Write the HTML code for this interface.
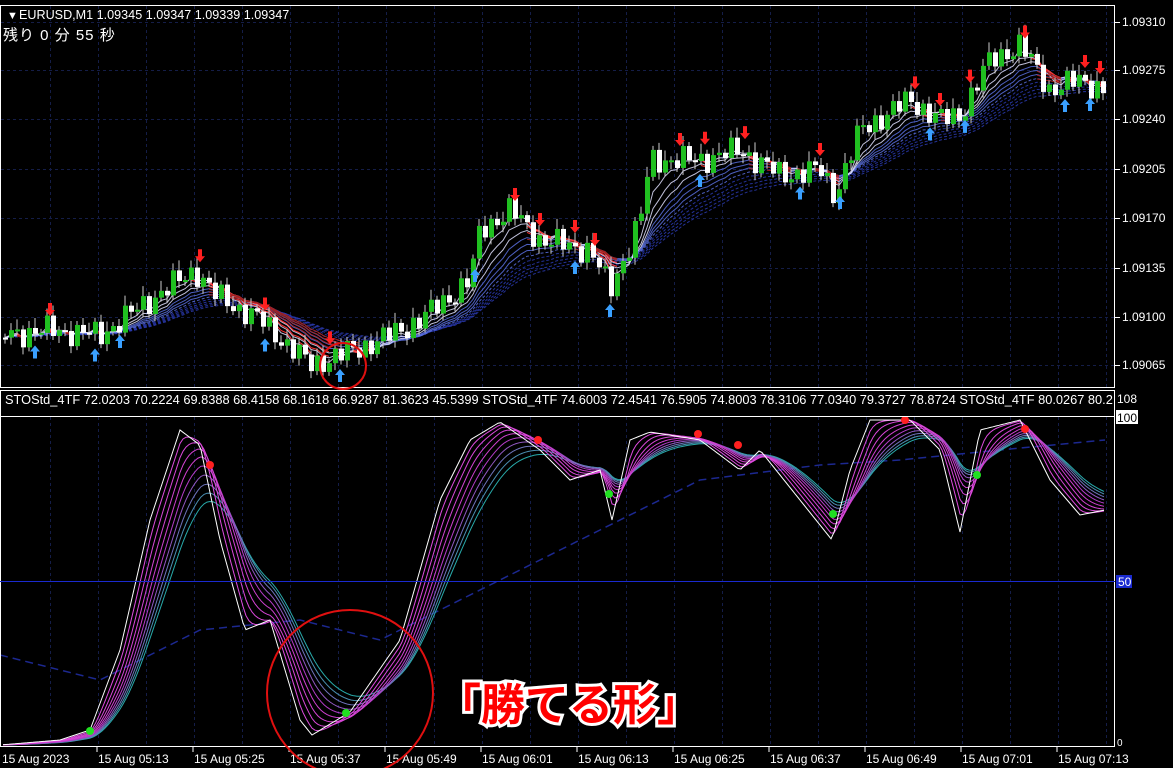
<!DOCTYPE html>
<html><head><meta charset="utf-8">
<style>
html,body{margin:0;padding:0;background:#000;width:1173px;height:768px;overflow:hidden}
svg{display:block}
text{font-family:"Liberation Sans","Noto Sans CJK JP",sans-serif}
</style></head><body>
<svg id="s" width="1173" height="768" xmlns="http://www.w3.org/2000/svg">
<rect width="1173" height="768" fill="#000"/>
<g id="grid" stroke="#141d48" stroke-dasharray="3,3" stroke-width="1"></g>
<g id="draw"></g>
<rect x="0.5" y="5.5" width="1114" height="382" fill="none" stroke="#fff"/>
<rect x="0.5" y="390.5" width="1114" height="356" fill="none" stroke="#fff"/>
<line x1="0" y1="416.5" x2="1115" y2="416.5" stroke="#fff"/>
<line x1="0" y1="581.5" x2="1115" y2="581.5" stroke="#1a2ad0"/>
<g fill="#fff" font-size="12">
<text x="7" y="19" font-size="11">▼</text>
<text x="19" y="19" font-size="12.6">EURUSD,M1  1.09345 1.09347 1.09339 1.09347</text>
<text x="3" y="40" font-size="15" letter-spacing="1">残り 0 分 55 秒</text>
<text x="5" y="404" font-size="12.8">STOStd_4TF 72.0203 70.2224 69.8388 68.4158 68.1618 66.9287 81.3623 45.5399   STOStd_4TF 74.6003 72.4541 76.5905 74.8003 78.3106 77.0340 79.3727 78.8724   STOStd_4TF 80.0267 80.2</text>
</g>
<rect x="1115" y="391" width="58" height="22" fill="#000"/>
<g id="axis" fill="#fff" font-size="12"></g>
<rect x="1116" y="410" width="22" height="14" fill="#fff"/>
<text x="1117" y="422" font-size="12" fill="#000">100</text>
<text x="1117" y="403" font-size="12" fill="#fff">108</text>
<rect x="1116" y="575" width="16" height="13" fill="#1a2ad0"/>
<text x="1118" y="586" font-size="12" fill="#fff">50</text>
<text x="1117" y="746" font-size="10" fill="#fff">0</text>
<circle cx="343" cy="366" r="23" fill="none" stroke="#e01010" stroke-width="2"/>
<circle cx="350" cy="693" r="83" fill="none" stroke="#e01010" stroke-width="2"/>
<text x="437" y="720" font-size="44" font-weight="bold" fill="#f00" stroke="#fff" stroke-width="6" paint-order="stroke">「勝てる形」</text>
</svg>
<script>
const NS="http://www.w3.org/2000/svg";
const g=document.getElementById('draw'),gr=document.getElementById('grid'),ax=document.getElementById('axis');
function el(t,a,p){const e=document.createElementNS(NS,t);for(const k in a)e.setAttribute(k,a[k]);(p||g).appendChild(e);return e;}
for(let x=50;x<1115;x+=48){el('line',{x1:x+.5,y1:6,x2:x+.5,y2:387},gr);el('line',{x1:x+.5,y1:417,x2:x+.5,y2:746},gr);}
const py=[22,70,119,169,218,268,317,365],pl=["1.09310","1.09275","1.09240","1.09205","1.09170","1.09135","1.09100","1.09065"];
py.forEach((y,i)=>{el('line',{x1:1,y1:y+.5,x2:1114,y2:y+.5},gr);el('line',{x1:1115,y1:y+.5,x2:1120,y2:y+.5,stroke:'#fff'},ax);const t=el('text',{x:1122,y:y+4},ax);t.textContent=pl[i];});
const tl=["15 Aug 2023","15 Aug 05:13","15 Aug 05:25","15 Aug 05:37","15 Aug 05:49","15 Aug 06:01","15 Aug 06:13","15 Aug 06:25","15 Aug 06:37","15 Aug 06:49","15 Aug 07:01","15 Aug 07:13"];
tl.forEach((s,i)=>{const x=2+i*96;if(i>0)el('line',{x1:x-1,y1:747,x2:x-1,y2:752,stroke:'#fff'},ax);const t=el('text',{x:x,y:763},ax);t.textContent=s;});
function interp(P,x){for(let i=0;i<P.length-1;i++){if(x>=P[i][0]&&x<=P[i+1][0]){const t=(x-P[i][0])/(P[i+1][0]-P[i][0]);return P[i][1]+t*(P[i+1][1]-P[i][1]);}}return P[P.length-1][1];}
function ema(arr,n){const a=2/(n+1);let o=[],v=arr[0];for(const x of arr){v=v+a*(x-v);o.push(v);}return o;}
function mix(c1,c2,t){return 'rgb('+c1.map((c,i)=>Math.round(c+(c2[i]-c)*t)).join(',')+')';}
const P=[[0,335],[50,330],[100,335],[150,300],[195,270],[215,295],[260,320],[310,365],[340,355],[380,340],[420,320],[470,280],[480,230],[510,210],[540,240],[590,250],[610,290],[640,220],[650,160],[700,160],[740,150],[780,175],[820,170],[835,195],[860,130],[910,100],[940,120],[960,115],[990,60],[1020,45],[1050,90],[1080,80],[1105,90]];
const xs=[];for(let x=5;x<=1105;x+=6)xs.push(x);
const cl=xs.map(x=>interp(P,x)+Math.sin(x*1.7)*10+Math.sin(x*0.9)*5);
for(let k=12;k>=1;k--){const e=ema(cl,2+k*2.6);let d='';
 xs.forEach((x,i)=>{d+=(i?'L':'M')+x+','+e[i].toFixed(1);});
 const col=k<4?'#e0e0ff':(k<8?'#5a70e0':'#2a3ab0');
 el('path',{d:d,fill:'none',stroke:col,'stroke-width':1,'stroke-dasharray':k>6?'3,2':'none',opacity:.85});}
for(let k=1;k<8;k++){const e=ema(cl,3+k*2.5);let d='';for(let i=1;i<xs.length;i++){if(cl[i]>e[i]+3)d+='M'+xs[i-1]+','+e[i-1].toFixed(1)+'L'+xs[i]+','+e[i].toFixed(1);}
 el('path',{d:d,fill:'none',stroke:k<4?'#ff3030':'#a02020','stroke-width':1});}
let prev=cl[0];
xs.forEach((x,i)=>{const c=cl[i],o=prev;prev=c;const top=Math.min(o,c),h=Math.max(2,Math.abs(o-c));const up=c<o;
 el('line',{x1:x,y1:top-4-(i%3)*3,x2:x,y2:top+h+4+(i%2)*3,stroke:'#ccc'});
 el('rect',{x:x-2,y:top,width:5,height:h,fill:up?'#20c020':'#fff'});});
const ups=[35,95,120,265,340,475,575,610,700,800,840,930,965,1065,1090],dns=[50,200,265,330,515,540,575,595,680,705,745,820,915,940,970,1025,1085,1100];
ups.forEach(x=>{const y=interp(P,x)+14;el('path',{d:`M${x},${y} l-5,6 h3 v7 h4 v-7 h3 z`,fill:'#3aa0ff'});});
dns.forEach(x=>{const y=interp(P,x)-14;el('path',{d:`M${x},${y} l-5,-6 h3 v-7 h4 v7 h3 z`,fill:'#ff2020'});});
const S=[[0,745],[60,740],[90,730],[120,650],[150,520],[180,430],[200,445],[220,540],[245,630],[270,620],[300,720],[312,735],[350,712],[400,640],[440,500],[470,440],[500,422],[540,450],[570,480],[600,470],[612,520],[630,440],[650,432],[700,440],[740,470],[760,450],[800,500],[832,540],[850,470],[870,420],[910,420],[940,450],[960,532],[980,430],[1020,420],[1050,480],[1080,515],[1105,510]];
const sx=[];for(let x=3;x<=1105;x+=3)sx.push(x);
const sv=sx.map(x=>interp(S,x));
const B=[[0,655],[100,680],[200,630],[300,620],[380,640],[500,580],[600,530],[700,480],[820,465],[900,460],[1000,450],[1105,440]];
let db='';B.forEach((p,i)=>db+=(i?'L':'M')+p[0]+','+p[1]);
el('path',{d:db,fill:'none',stroke:'#1c2890','stroke-width':1.5,'stroke-dasharray':'8,5'});
for(let k=9;k>=0;k--){const e=k?ema(sv,1+k*3):sv;let d='';sx.forEach((x,i)=>d+=(i?'L':'M')+x+','+e[i].toFixed(1));
 const col=k==0?'#ffffff':(k<5?mix([230,80,230],[200,60,200],k/5):mix([180,60,200],[40,170,170],(k-5)/4));
 el('path',{d:d,fill:'none',stroke:col,'stroke-width':1});}
[[90,731],[346,713],[609,494],[833,514],[977,475]].forEach(p=>el('circle',{cx:p[0],cy:p[1],r:4,fill:'#20e020'}));
[[210,465],[538,440],[698,434],[738,445],[905,420],[1025,429]].forEach(p=>el('circle',{cx:p[0],cy:p[1],r:4,fill:'#ff2020'}));
</script>
</body></html>
